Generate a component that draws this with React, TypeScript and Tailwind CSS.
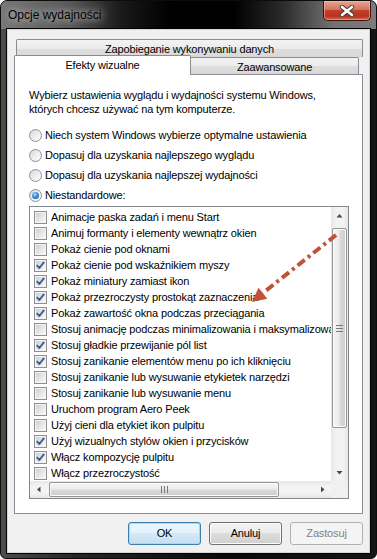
import React from "react";

const effects: [string, boolean][] = [
  ["Animacje paska zadań i menu Start", false],
  ["Animuj formanty i elementy wewnątrz okien", false],
  ["Pokaż cienie pod oknami", false],
  ["Pokaż cienie pod wskaźnikiem myszy", true],
  ["Pokaż miniatury zamiast ikon", true],
  ["Pokaż przezroczysty prostokąt zaznaczenia", true],
  ["Pokaż zawartość okna podczas przeciągania", true],
  ["Stosuj animację podczas minimalizowania i maksymalizowania okien", false],
  ["Stosuj gładkie przewijanie pól list", true],
  ["Stosuj zanikanie elementów menu po ich kliknięciu", true],
  ["Stosuj zanikanie lub wysuwanie etykietek narzędzi", false],
  ["Stosuj zanikanie lub wysuwanie menu", false],
  ["Uruchom program Aero Peek", false],
  ["Użyj cieni dla etykiet ikon pulpitu", false],
  ["Użyj wizualnych stylów okien i przycisków", true],
  ["Włącz kompozycję pulpitu", true],
  ["Włącz przezroczystość", false],
];

const radios = [
  "Niech system Windows wybierze optymalne ustawienia",
  "Dopasuj dla uzyskania najlepszego wyglądu",
  "Dopasuj dla uzyskania najlepszej wydajności",
  "Niestandardowe:",
];

function CheckBox({ checked }: { checked: boolean }) {
  return (
    <span className="relative flex h-[13px] w-[13px] shrink-0 items-center justify-center border border-[#8e8f8f] bg-[#f4f4f4]">
      <span className="h-[9px] w-[9px] bg-gradient-to-br from-[#cfd1d6] to-[#f9f9f9]" />
      {checked && (
        <svg className="absolute left-0 top-0" width="11" height="11" viewBox="0 0 11 11">
          <path d="M2.2 5.6 L4.4 8 L8.8 2.4" fill="none" stroke="#3f5d96" strokeWidth="1.9" strokeLinecap="round" strokeLinejoin="round" />
        </svg>
      )}
    </span>
  );
}

function Radio({ selected }: { selected: boolean }) {
  return (
    <span className="flex h-[13px] w-[13px] shrink-0 items-center justify-center rounded-full border border-[#8c8f94] bg-gradient-to-br from-[#d4d6da] via-[#eeeeee] to-[#fdfdfd]">
      {selected && (
        <span className="h-[7px] w-[7px] rounded-full bg-[radial-gradient(circle_at_40%_35%,#a8e0ff_0%,#3a8fd8_45%,#0f3f7c_100%)]" />
      )}
    </span>
  );
}

function Arrow({ dir }: { dir: "up" | "down" | "left" | "right" }) {
  const pts = {
    up: "0.5,4.5 3.5,1 6.5,4.5",
    down: "0.5,1 3.5,4.5 6.5,1",
    left: "4.5,0.5 1,3.5 4.5,6.5",
    right: "1,0.5 4.5,3.5 1,6.5",
  }[dir];
  const vertical = dir === "up" || dir === "down";
  return (
    <svg width={vertical ? 7 : 5.5} height={vertical ? 5.5 : 7} viewBox={vertical ? "0 0 7 5.5" : "0 0 5.5 7"}>
      <polygon points={pts} fill="#4a4a4a" />
    </svg>
  );
}

function PushButton({ label, primary, disabled }: { label: string; primary?: boolean; disabled?: boolean }) {
  if (disabled) {
    return (
      <div className="flex h-[23px] w-[73px] items-center justify-center rounded-[3px] border border-[#adb2b5] bg-[#f4f4f4] text-[#838383]">
        {label}
      </div>
    );
  }
  return (
    <div
      className={
        primary
          ? "flex h-[23px] w-[73px] items-center justify-center rounded-[3px] border border-[#3c7fb1] bg-[linear-gradient(#eaf6fd,#e3f1fb_50%,#d4e9f7_50%,#c4e0f3)] shadow-[inset_0_0_0_1px_#9edcf9]"
          : "flex h-[23px] w-[73px] items-center justify-center rounded-[3px] border border-[#707070] bg-[linear-gradient(#f2f2f2,#ebebeb_50%,#dddddd_50%,#cfcfcf)] shadow-[inset_0_0_0_1px_#fbfbfb]"
      }
    >
      {label}
    </div>
  );
}

export default function App() {
  return (
    <div className="relative h-[559px] w-[377px] bg-white font-['Liberation_Sans',Arial,sans-serif] text-[11px] leading-none tracking-[-0.15px] text-black">
      <div className="flex h-full flex-col rounded-t-[7px] rounded-b-[6px] border border-[#0c0c0c] bg-[linear-gradient(to_right,#4c4c4c,#262626_20%,#0a0a0a_60%,#151515)]">
        {/* title bar */}
        <div className="flex h-[28px] shrink-0 items-start justify-between rounded-t-[6px] bg-[linear-gradient(to_right,#787878,#5a5a5a_18%,#1a1a1a_32%,#000_45%,#000_62%,#2a2a2a_75%,#707070_88%,#7c7c7c)]">
          <span className="mt-[8px] pl-[7px] text-[12px] tracking-normal [text-shadow:0_0_6px_#bdbdbd,0_0_10px_#9a9a9a,0_0_14px_#8a8a8a]">
            Opcje wydajności
          </span>
          <div className="mr-[5px] flex h-[20px] w-[48px] items-center justify-center rounded-b-[5px] border border-t-0 border-[#3a1510] bg-[linear-gradient(#e8a592,#d27560_45%,#c2412a_50%,#b83220_80%,#d46a4a)] shadow-[inset_0_0_0_1px_rgba(255,200,180,0.5)]">
            <svg width="16" height="12" viewBox="0 0 16 12">
              <path d="M3 2 L13 10 M13 2 L3 10" stroke="#3b3b3b" strokeWidth="4.4" strokeLinecap="round" />
              <path d="M3 2 L13 10 M13 2 L3 10" stroke="#ffffff" strokeWidth="2.6" strokeLinecap="round" />
            </svg>
          </div>
        </div>

        {/* client area */}
        <div className="ml-[6px] mr-[6px] mb-[5px] flex flex-1 flex-col border border-[#d6d6d6] bg-[#f0f0f0] px-[6px] pt-[9px] shadow-[0_0_0_1px_#000]">
          {/* back row tab */}
          <div className="ml-[2px] flex h-[18px] shrink-0 items-center justify-center rounded-t-[2px] border border-b-0 border-[#898c95] bg-[linear-gradient(#f3f3f3,#ebebeb_50%,#dedede_50%,#d9d9d9)] pt-[1px]">
            Zapobieganie wykonywaniu danych
          </div>
          {/* front row tabs */}
          <div className="flex h-[17px] shrink-0 items-end">
            <div className="relative z-10 -mb-px flex h-[20px] w-[177px] items-center justify-center rounded-t-[2px] border border-b-0 border-[#898c95] bg-white pb-[1px]">
              Efekty wizualne
            </div>
            <div className="flex h-[17px] w-[168px] items-center justify-center rounded-tr-[2px] border border-b-0 border-l-0 border-[#898c95] bg-[linear-gradient(#f3f3f3,#ebebeb_50%,#dedede_50%,#d9d9d9)] pt-[2px]">
              Zaawansowane
            </div>
          </div>

          {/* tab panel */}
          <div className="flex h-[440px] shrink-0 flex-col border border-[#898c95] bg-white pl-[14px] pr-[12px] pt-[13px]">
            <p className="leading-[14px]">
              Wybierz ustawienia wyglądu i wydajności systemu Windows,
              <br />
              których chcesz używać na tym komputerze.
            </p>

            <div className="mt-[9px] flex flex-col">
              {radios.map((r, i) => (
                <div key={r} className="flex h-[20px] items-center gap-[3px]">
                  <Radio selected={i === 3} />
                  <span>{r}</span>
                </div>
              ))}
            </div>

            {/* list of effects */}
            <div className="mt-px flex h-[293px] w-[320px] flex-col border border-[#828790]">
              <div className="flex min-h-0 flex-1">
                <div className="min-w-0 flex-1 overflow-hidden pt-[2px]">
                  {effects.map(([label, on]) => (
                    <div key={label} className="flex h-[16px] items-center gap-[4px] whitespace-nowrap pl-[4px]">
                      <CheckBox checked={on} />
                      <span>{label}</span>
                    </div>
                  ))}
                </div>
                {/* vertical scrollbar */}
                <div className="flex w-[17px] shrink-0 flex-col items-center bg-[linear-gradient(to_right,#e6e6e6,#f3f3f3_30%,#f3f3f3_70%,#e6e6e6)]">
                  <div className="flex h-[17px] w-full items-center justify-center">
                    <Arrow dir="up" />
                  </div>
                  <div className="mt-[4px] flex h-[200px] w-[15px] items-center justify-center rounded-[2px] border border-[#959595] bg-[linear-gradient(to_right,#f5f5f5,#ececec_45%,#dadada_55%,#cdcdcd)] shadow-[inset_0_0_0_1px_#fbfbfb]">
                    <div className="flex flex-col gap-[2px]">
                      <span className="h-px w-[7px] bg-[#777]" />
                      <span className="h-px w-[7px] bg-[#777]" />
                      <span className="h-px w-[7px] bg-[#777]" />
                    </div>
                  </div>
                  <div className="flex-1" />
                  <div className="flex h-[17px] w-full items-center justify-center">
                    <Arrow dir="down" />
                  </div>
                </div>
              </div>
              {/* horizontal scrollbar */}
              <div className="flex h-[17px] shrink-0">
                <div className="flex min-w-0 flex-1 items-center bg-[linear-gradient(#e6e6e6,#f3f3f3_30%,#f3f3f3_70%,#e6e6e6)]">
                  <div className="flex h-full w-[17px] items-center justify-center">
                    <Arrow dir="left" />
                  </div>
                  <div className="ml-[2px] flex h-[15px] w-[230px] items-center justify-center rounded-[2px] border border-[#959595] bg-[linear-gradient(#f5f5f5,#ececec_45%,#dadada_55%,#cdcdcd)] shadow-[inset_0_0_0_1px_#fbfbfb]">
                    <div className="flex gap-[2px]">
                      <span className="h-[7px] w-px bg-[#777]" />
                      <span className="h-[7px] w-px bg-[#777]" />
                      <span className="h-[7px] w-px bg-[#777]" />
                    </div>
                  </div>
                  <div className="flex-1" />
                  <div className="flex h-full w-[17px] items-center justify-center">
                    <Arrow dir="right" />
                  </div>
                </div>
                <div className="w-[17px] shrink-0 bg-[#f0f0f0]" />
              </div>
            </div>
          </div>

          {/* dialog buttons */}
          <div className="mt-[8px] flex justify-end gap-[8px]">
            <PushButton label="OK" primary />
            <PushButton label="Anuluj" />
            <PushButton label="Zastosuj" disabled />
          </div>
        </div>
      </div>

      {/* annotation arrow drawn over the dialog */}
      <svg className="pointer-events-none absolute left-0 top-0" width="377" height="559" viewBox="0 0 377 559">
        <line x1="336" y1="235" x2="263" y2="293" stroke="#c4503c" strokeWidth="4" strokeDasharray="9 4 3 4" />
        <polygon points="252,302 258.5,287.8 267.3,298.8" fill="#c4503c" />
      </svg>
    </div>
  );
}
